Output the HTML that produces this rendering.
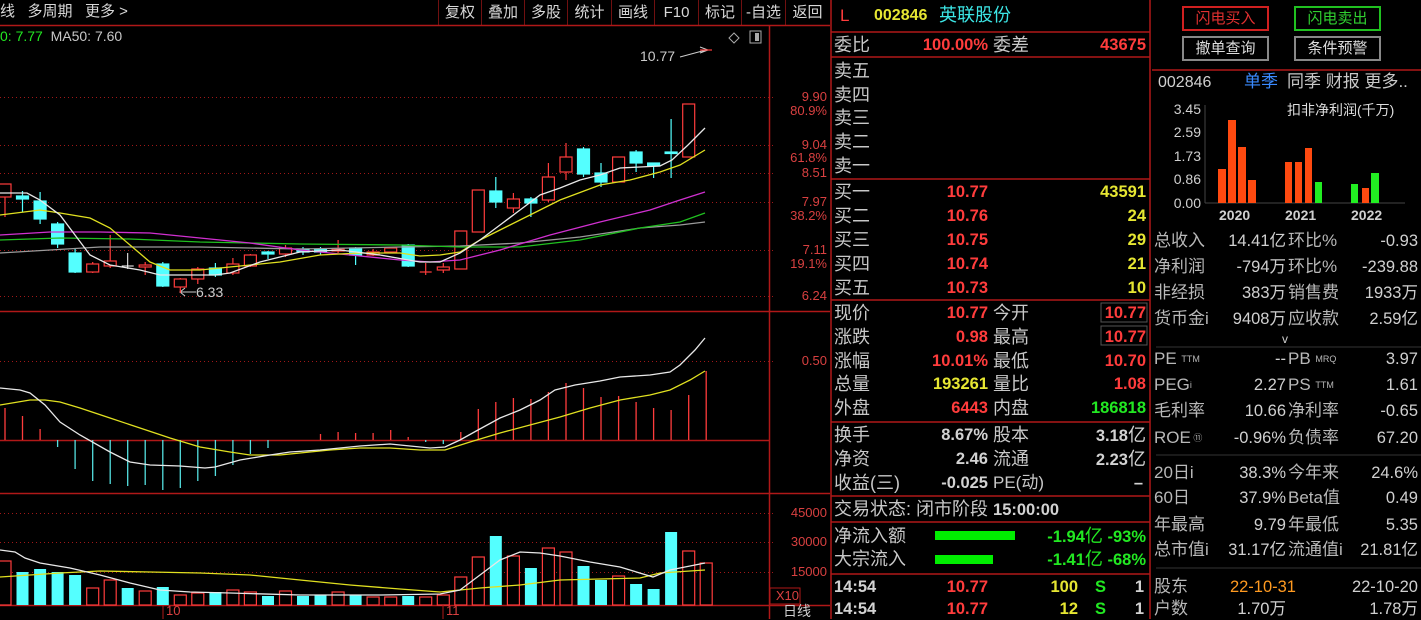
<!DOCTYPE html>
<html><head><meta charset="utf-8">
<style>
*{margin:0;padding:0;box-sizing:border-box}
body{width:1421px;height:619px;background:#000;position:relative;overflow:hidden;font-family:"Liberation Sans","Noto Sans CJK SC",sans-serif;color:#c8c8c8}
.t{position:absolute;white-space:nowrap;line-height:22px}
.l{font-size:18px;color:#c8c8c8}
.n{font-size:16.5px;font-weight:bold}
.r{color:#ff3c3c}.y{color:#e6e632}.g{color:#22e822}.c{color:#3ce6e6}.w{color:#d2d2d2}
.rl{font-size:17px;color:#b8b8b8}
.rv{font-size:16.5px;color:#d0d0d0}
sup{font-size:9px;line-height:0;position:relative;top:-2px;vertical-align:baseline}
.btn{position:absolute;border:2px solid #888;height:25px;width:87px;text-align:center;font-size:15px;line-height:21px}
.tb{position:absolute;top:0;height:25px;line-height:25px;font-size:15px;color:#d8d8d8;text-align:center;border-left:1px solid #701010}
.ax{position:absolute;font-size:13px;color:#d84040;right:594px;line-height:14px}
</style></head><body>

<div class="t" style="left:0;top:1px;font-size:15px;color:#d8d8d8">线&nbsp;&nbsp;&nbsp;多周期&nbsp;&nbsp;&nbsp;更多 &gt;</div>
<div class="tb" style="left:438px;width:43px">复权</div>
<div class="tb" style="left:481px;width:43px">叠加</div>
<div class="tb" style="left:524px;width:43px">多股</div>
<div class="tb" style="left:567px;width:44px">统计</div>
<div class="tb" style="left:611px;width:43px">画线</div>
<div class="tb" style="left:654px;width:44px">F10</div>
<div class="tb" style="left:698px;width:43px">标记</div>
<div class="tb" style="left:741px;width:44px">-自选</div>
<div class="tb" style="left:785px;width:44px">返回</div>

<div class="t" style="left:0;top:25px;font-size:14px"><span class="g">0: 7.77</span>&nbsp;&nbsp;<span style="color:#c8c8c8">MA50: 7.60</span></div>

<svg width="1421" height="619" style="position:absolute;left:0;top:0" xmlns="http://www.w3.org/2000/svg">
<g stroke="#b01818" stroke-width="1.5">
<line x1="0" y1="25.5" x2="830" y2="25.5"/>
<line x1="769.5" y1="25" x2="769.5" y2="619"/>
<line x1="0" y1="311.5" x2="830" y2="311.5"/>
<line x1="0" y1="493.5" x2="830" y2="493.5"/>
<line x1="0" y1="605.5" x2="830" y2="605.5"/>
<line x1="831" y1="0" x2="831" y2="619"/>
<line x1="1150" y1="0" x2="1150" y2="619"/>
<line x1="831" y1="32" x2="1150" y2="32"/>
<line x1="831" y1="57" x2="1150" y2="57"/>
<line x1="831" y1="179" x2="1150" y2="179"/>
<line x1="831" y1="300" x2="1150" y2="300"/>
<line x1="831" y1="422" x2="1150" y2="422"/>
<line x1="831" y1="496" x2="1150" y2="496"/>
<line x1="831" y1="522" x2="1150" y2="522"/>
<line x1="831" y1="574" x2="1150" y2="574"/>
<line x1="1152" y1="70" x2="1421" y2="70"/>
<line x1="0" y1="440.5" x2="769" y2="440.5"/>
</g>
<g stroke="#333" stroke-width="1">
<line x1="1156" y1="347" x2="1421" y2="347"/>
<line x1="1156" y1="455" x2="1421" y2="455"/>
<line x1="1156" y1="568" x2="1421" y2="568"/>
</g>
<g stroke="#a01818" stroke-width="1" stroke-dasharray="1,3">
<line x1="0" y1="97.5" x2="775" y2="97.5"/>
<line x1="0" y1="145.5" x2="775" y2="145.5"/>
<line x1="0" y1="173.5" x2="775" y2="173.5"/>
<line x1="0" y1="202.5" x2="775" y2="202.5"/>
<line x1="0" y1="250.5" x2="775" y2="250.5"/>
<line x1="0" y1="296.5" x2="775" y2="296.5"/>
<line x1="0" y1="361.5" x2="775" y2="361.5"/>
<line x1="0" y1="513.5" x2="775" y2="513.5"/>
<line x1="0" y1="542.5" x2="775" y2="542.5"/>
<line x1="0" y1="572.5" x2="775" y2="572.5"/>
</g>
<path d="M734 33 l5 5 l-5 5 l-5 -5z" fill="none" stroke="#aaa"/>
<rect x="750" y="31" width="11" height="12" fill="none" stroke="#aaa"/><rect x="755" y="33" width="4" height="8" fill="#aaa"/>
<path d="M680 57 L706 50 M700 47 L708 50 L700 53" stroke="#ccc" fill="none"/>
<path d="M180 292 L196 292 M185 288 L180 292 L185 296" stroke="#ccc" fill="none"/>
<g stroke="#ff3c3c" fill="#000" stroke-width="1.2">
<line x1="5" y1="197" x2="5" y2="217"/><rect x="-1" y="184" width="12" height="13"/>
<line x1="92.7" y1="262" x2="92.7" y2="273"/><rect x="86.7" y="264" width="12" height="8"/>
<line x1="110.2" y1="235" x2="110.2" y2="268"/><rect x="104.2" y="261" width="12" height="5"/>
<line x1="145.2" y1="262" x2="145.2" y2="275"/><rect x="139.2" y="265" width="12" height="2"/>
<line x1="180.3" y1="278" x2="180.3" y2="293"/><rect x="174.3" y="279" width="12" height="8"/>
<line x1="197.8" y1="267" x2="197.8" y2="284"/><rect x="191.8" y="269" width="12" height="10"/>
<line x1="232.9" y1="258" x2="232.9" y2="275"/><rect x="226.9" y="264" width="12" height="9"/>
<line x1="250.4" y1="254" x2="250.4" y2="267"/><rect x="244.4" y="255" width="12" height="11"/>
<line x1="285.5" y1="245" x2="285.5" y2="257"/><rect x="279.5" y="248" width="12" height="6"/>
<line x1="338.1" y1="240" x2="338.1" y2="253"/><rect x="332.1" y="249" width="12" height="2"/>
<line x1="373.1" y1="249" x2="373.1" y2="256"/><rect x="367.1" y="252" width="12" height="3"/>
<line x1="390.7" y1="247" x2="390.7" y2="253"/><rect x="384.7" y="248" width="12" height="4"/>
<line x1="425.7" y1="263" x2="425.7" y2="275"/><line x1="419.7" y1="272" x2="431.7" y2="272"/>
<line x1="443.3" y1="263" x2="443.3" y2="273"/><rect x="437.3" y="267" width="12" height="3"/>
<rect x="454.8" y="231" width="12" height="38"/>
<rect x="472.3" y="190" width="12" height="42"/>
<line x1="513.4" y1="193" x2="513.4" y2="213"/><rect x="507.4" y="199" width="12" height="9"/>
<line x1="548.4" y1="163" x2="548.4" y2="202"/><rect x="542.4" y="177" width="12" height="23"/>
<line x1="566" y1="143" x2="566" y2="180"/><rect x="560" y="157" width="12" height="15"/>
<rect x="612.6" y="157" width="12" height="25"/>
<rect x="682.7" y="104" width="12" height="53"/>
<line x1="700" y1="50" x2="712" y2="50"/>
</g>
<g stroke="#54ffff" fill="#54ffff" stroke-width="1.2">
<line x1="22.5" y1="191" x2="22.5" y2="212"/><rect x="16.5" y="196" width="12" height="3"/>
<line x1="40.1" y1="192" x2="40.1" y2="224"/><rect x="34.1" y="201" width="12" height="18"/>
<line x1="57.6" y1="222" x2="57.6" y2="248"/><rect x="51.6" y="224" width="12" height="20"/>
<line x1="75.1" y1="248" x2="75.1" y2="273"/><rect x="69.1" y="253" width="12" height="19"/>
<line x1="162.8" y1="262" x2="162.8" y2="287"/><rect x="156.8" y="264" width="12" height="22"/>
<line x1="215.4" y1="263" x2="215.4" y2="277"/><rect x="209.4" y="268" width="12" height="7"/>
<line x1="268" y1="251" x2="268" y2="259"/><rect x="262" y="252" width="12" height="2"/>
<line x1="303" y1="247" x2="303" y2="255"/><rect x="297" y="249" width="12" height="3"/>
<line x1="320.5" y1="247" x2="320.5" y2="255"/><rect x="314.5" y="249" width="12" height="3"/>
<line x1="355.6" y1="247" x2="355.6" y2="265"/><rect x="349.6" y="248" width="12" height="7"/>
<line x1="408.2" y1="244" x2="408.2" y2="267"/><rect x="402.2" y="245" width="12" height="21"/>
<line x1="495.8" y1="177" x2="495.8" y2="208"/><rect x="489.8" y="191" width="12" height="11"/>
<line x1="530.9" y1="197" x2="530.9" y2="217"/><rect x="524.9" y="199" width="12" height="4"/>
<line x1="583.5" y1="147" x2="583.5" y2="177"/><rect x="577.5" y="149" width="12" height="25"/>
<line x1="601" y1="163" x2="601" y2="187"/><rect x="595" y="173" width="12" height="9"/>
<line x1="636.1" y1="150" x2="636.1" y2="172"/><rect x="630.1" y="152" width="12" height="11"/>
<line x1="653.6" y1="163" x2="653.6" y2="178"/><rect x="647.6" y="163" width="12" height="3"/>
<line x1="671.1" y1="119" x2="671.1" y2="178"/><rect x="665.1" y="152" width="12" height="1.5"/>
</g>
<path d="M121.7 266 H133.7 M127.7 253 V269" stroke="#fff"/>
<g fill="none" stroke-width="1.3">
<polyline stroke="#9a9a9a" points="0,253 50,250 100,247 200,247 300,249 400,247 460,246 520,243 580,237 640,228 680,225 705,222"/>
<polyline stroke="#20c020" points="0,240 60,238 130,239 200,242 300,244 400,245 460,247 520,247 580,240 640,228 680,222 705,213"/>
<polyline stroke="#d030d0" points="0,235 50,232 100,232 150,233 200,238 250,243 300,250 350,255 400,260 430,262 460,260 500,250 550,235 600,222 650,210 680,200 705,192"/>
<polyline stroke="#e0e020" points="0,215 40,210 60,213 90,218 110,228 130,245 150,262 170,270 200,270 230,267 280,262 320,255 360,253 400,253 420,256 440,255 460,252 480,240 500,230 530,215 560,200 600,185 630,180 660,172 680,165 705,150"/>
<polyline stroke="#e8e8e8" points="0,193 27,193 40,200 60,215 75,235 90,255 110,265 140,270 160,275 190,275 215,275 230,273 260,262 300,252 340,250 380,255 420,262 440,262 460,253 480,240 500,225 520,210 540,195 560,188 580,180 600,175 620,168 640,167 660,166 672,160 688,145 705,128"/>
</g>
<g stroke="#ff3c3c" stroke-width="1.3">
<line x1="5" y1="440" x2="5" y2="408"/><line x1="22.5" y1="440" x2="22.5" y2="416"/><line x1="40.1" y1="440" x2="40.1" y2="429"/>
<line x1="320.5" y1="440" x2="320.5" y2="434"/><line x1="338.1" y1="440" x2="338.1" y2="432"/><line x1="355.6" y1="440" x2="355.6" y2="433"/><line x1="373.1" y1="440" x2="373.1" y2="433"/><line x1="390.7" y1="440" x2="390.7" y2="430"/><line x1="408.2" y1="440" x2="408.2" y2="437"/>
<line x1="460.8" y1="440" x2="460.8" y2="432"/><line x1="478.3" y1="440" x2="478.3" y2="409"/><line x1="495.8" y1="440" x2="495.8" y2="402"/><line x1="513.4" y1="440" x2="513.4" y2="398"/><line x1="530.9" y1="440" x2="530.9" y2="399"/><line x1="548.4" y1="440" x2="548.4" y2="392"/><line x1="566" y1="440" x2="566" y2="383"/><line x1="583.5" y1="440" x2="583.5" y2="388"/><line x1="601" y1="440" x2="601" y2="397"/><line x1="618.6" y1="440" x2="618.6" y2="396"/><line x1="636.1" y1="440" x2="636.1" y2="402"/><line x1="653.6" y1="440" x2="653.6" y2="408"/><line x1="671.1" y1="440" x2="671.1" y2="410"/><line x1="688.7" y1="440" x2="688.7" y2="395"/><line x1="706.2" y1="440" x2="706.2" y2="371"/>
</g>
<g stroke="#54e0e0" stroke-width="1.3">
<line x1="57.6" y1="440" x2="57.6" y2="447"/><line x1="75.1" y1="440" x2="75.1" y2="469"/><line x1="92.7" y1="440" x2="92.7" y2="481"/><line x1="110.2" y1="440" x2="110.2" y2="484"/><line x1="127.7" y1="440" x2="127.7" y2="486"/><line x1="145.2" y1="440" x2="145.2" y2="485"/><line x1="162.8" y1="440" x2="162.8" y2="490"/><line x1="180.3" y1="440" x2="180.3" y2="488"/><line x1="197.8" y1="440" x2="197.8" y2="481"/><line x1="215.4" y1="440" x2="215.4" y2="476"/><line x1="232.9" y1="440" x2="232.9" y2="465"/><line x1="250.4" y1="440" x2="250.4" y2="454"/><line x1="268" y1="440" x2="268" y2="448"/><line x1="425.7" y1="440" x2="425.7" y2="442"/><line x1="443.3" y1="440" x2="443.3" y2="444"/>
</g>
<g fill="none" stroke-width="1.3">
<polyline stroke="#e0e020" points="0,405 30,400 45,400 60,402 80,408 110,418 140,428 170,438 200,447 230,452 250,455 280,455 300,453 330,450 360,448 390,448 420,450 445,450 470,442 500,433 530,425 560,417 590,408 620,400 650,395 670,390 690,380 705,371"/>
<polyline stroke="#e8e8e8" points="0,388 20,390 30,393 45,405 60,422 80,435 110,452 130,462 150,465 180,466 205,468 215,467 240,460 270,455 290,452 320,450 360,446 390,444 410,446 430,448 445,447 460,440 478,430 500,418 520,410 540,400 555,390 575,385 600,381 620,377 650,375 670,372 680,365 695,350 705,338"/>
</g>
<g fill="#000" stroke="#ff3c3c" stroke-width="1.2">
<rect x="-1" y="561" width="12" height="44"/><rect x="86.7" y="588" width="12" height="17"/><rect x="104.2" y="580" width="12" height="25"/><rect x="139.2" y="591" width="12" height="14"/><rect x="174.3" y="595" width="12" height="10"/><rect x="191.8" y="593" width="12" height="12"/><rect x="226.9" y="590" width="12" height="15"/><rect x="244.4" y="592" width="12" height="13"/><rect x="279.5" y="591" width="12" height="14"/><rect x="332.1" y="592" width="12" height="13"/><rect x="367.1" y="597" width="12" height="8"/><rect x="384.7" y="597" width="12" height="8"/><rect x="419.7" y="597" width="12" height="8"/><rect x="437.3" y="595" width="12" height="10"/><rect x="454.8" y="577" width="12" height="28"/><rect x="472.3" y="557" width="12" height="48"/><rect x="507.4" y="556" width="12" height="49"/><rect x="542.4" y="548" width="12" height="57"/><rect x="560" y="552" width="12" height="53"/><rect x="612.6" y="576" width="12" height="29"/><rect x="682.7" y="551" width="12" height="54"/><rect x="700.2" y="563" width="12" height="42"/>
</g>
<g fill="#54ffff">
<rect x="16.5" y="572" width="12" height="33"/><rect x="34.1" y="569" width="12" height="36"/><rect x="51.6" y="572" width="12" height="33"/><rect x="69.1" y="575" width="12" height="30"/><rect x="121.7" y="588" width="12" height="17"/><rect x="156.8" y="587" width="12" height="18"/><rect x="209.4" y="592" width="12" height="13"/><rect x="262" y="596" width="12" height="9"/><rect x="297" y="596" width="12" height="9"/><rect x="314.5" y="595" width="12" height="10"/><rect x="349.6" y="595" width="12" height="10"/><rect x="402.2" y="596" width="12" height="9"/><rect x="489.8" y="536" width="12" height="69"/><rect x="524.9" y="568" width="12" height="37"/><rect x="577.5" y="566" width="12" height="39"/><rect x="595" y="580" width="12" height="25"/><rect x="630.1" y="584" width="12" height="21"/><rect x="647.6" y="589" width="12" height="16"/><rect x="665.1" y="532" width="12" height="73"/>
</g>
<g fill="none" stroke-width="1.3">
<polyline stroke="#e0e020" points="0,577 60,573 100,571 150,572 200,573 250,575 300,580 350,585 400,589 440,592 460,590 480,588 520,585 560,580 600,579 640,578 660,573 690,571 705,570"/>
<polyline stroke="#e8e8e8" points="0,550 15,552 25,558 40,563 70,568 100,575 130,583 160,590 190,592 230,593 300,595 380,595 440,594 460,590 480,575 500,560 520,552 540,553 560,556 590,562 620,567 653,577 670,570 690,566 705,563"/>
</g>
<rect x="770" y="588" width="30" height="16" fill="none" stroke="#b01818"/>
<line x1="163" y1="605" x2="163" y2="619" stroke="#b01818"/>
<line x1="443" y1="605" x2="443" y2="619" stroke="#b01818"/>
<rect x="935" y="531" width="80" height="9" fill="#00ee00"/>
<rect x="935" y="555" width="58" height="9" fill="#00ee00"/>
<line x1="1205" y1="105" x2="1205" y2="203" stroke="#444"/>
<line x1="1205" y1="203" x2="1405" y2="203" stroke="#444"/>
<g fill="#ff4a10">
<rect x="1218" y="169" width="8" height="34"/><rect x="1228" y="120" width="8" height="83"/><rect x="1238" y="147" width="8" height="56"/><rect x="1248" y="180" width="8" height="23"/>
<rect x="1285" y="162" width="7" height="41"/><rect x="1295" y="162" width="7" height="41"/><rect x="1305" y="148" width="7" height="55"/>
<rect x="1362" y="188" width="7" height="15"/>
</g>
<g fill="#22ee22"><rect x="1315" y="182" width="7" height="21"/><rect x="1351" y="184" width="7" height="19"/><rect x="1371" y="173" width="8" height="30"/></g>
<rect x="1101" y="303" width="46" height="19" fill="none" stroke="#555"/>
<rect x="1101" y="326" width="46" height="19" fill="none" stroke="#555"/>
</svg>

<div class="ax" style="top:90px">9.90</div><div class="ax" style="top:104px">80.9%</div>
<div class="ax" style="top:138px">9.04</div><div class="ax" style="top:151px">61.8%</div>
<div class="ax" style="top:166px">8.51</div>
<div class="ax" style="top:195px">7.97</div><div class="ax" style="top:209px">38.2%</div>
<div class="ax" style="top:243px">7.11</div><div class="ax" style="top:257px">19.1%</div>
<div class="ax" style="top:289px">6.24</div>
<div class="ax" style="top:354px">0.50</div>
<div class="ax" style="top:506px">45000</div><div class="ax" style="top:535px">30000</div><div class="ax" style="top:565px">15000</div>
<div class="ax" style="top:589px;right:622px">X10</div>
<div class="t" style="left:640px;top:45px;font-size:14px;color:#ccc">10.77</div>
<div class="t" style="left:196px;top:281px;font-size:14px;color:#ccc">6.33</div>
<div class="t" style="left:166px;top:603px;font-size:13px;color:#d84040;line-height:16px">10</div>
<div class="t" style="left:446px;top:603px;font-size:13px;color:#d84040;line-height:16px">11</div>
<div class="t" style="left:783px;top:603px;font-size:14px;color:#ccc;line-height:16px">日线</div>

<div class="t r" style="left:840px;top:5px;font-size:17px">L</div>
<div class="t y n" style="left:874px;top:5px;font-size:16px">002846</div>
<div class="t c" style="left:939px;top:4px;font-size:18px">英联股份</div>

<div class="t l" style="left:834px;top:34px">委比</div>
<div class="t n r" style="right:433px;top:34px">100.00%</div>
<div class="t l" style="left:993px;top:34px">委差</div>
<div class="t n r" style="right:275px;top:34px">43675</div>

<div class="t l" style="left:834px;top:60px">卖五</div>
<div class="t l" style="left:834px;top:84px">卖四</div>
<div class="t l" style="left:834px;top:107px">卖三</div>
<div class="t l" style="left:834px;top:131px">卖二</div>
<div class="t l" style="left:834px;top:155px">卖一</div>

<div class="t l" style="left:834px;top:181px">买一</div><div class="t n r" style="right:433px;top:181px">10.77</div><div class="t n y" style="right:275px;top:181px">43591</div>
<div class="t l" style="left:834px;top:205px">买二</div><div class="t n r" style="right:433px;top:205px">10.76</div><div class="t n y" style="right:275px;top:205px">24</div>
<div class="t l" style="left:834px;top:229px">买三</div><div class="t n r" style="right:433px;top:229px">10.75</div><div class="t n y" style="right:275px;top:229px">29</div>
<div class="t l" style="left:834px;top:253px">买四</div><div class="t n r" style="right:433px;top:253px">10.74</div><div class="t n y" style="right:275px;top:253px">21</div>
<div class="t l" style="left:834px;top:277px">买五</div><div class="t n r" style="right:433px;top:277px">10.73</div><div class="t n y" style="right:275px;top:277px">10</div>

<div class="t l" style="left:834px;top:302px">现价</div><div class="t n r" style="right:433px;top:302px">10.77</div><div class="t l" style="left:993px;top:302px">今开</div><div class="t n r" style="right:275px;top:302px">10.77</div>
<div class="t l" style="left:834px;top:326px">涨跌</div><div class="t n r" style="right:433px;top:326px">0.98</div><div class="t l" style="left:993px;top:326px">最高</div><div class="t n r" style="right:275px;top:326px">10.77</div>
<div class="t l" style="left:834px;top:350px">涨幅</div><div class="t n r" style="right:433px;top:350px">10.01%</div><div class="t l" style="left:993px;top:350px">最低</div><div class="t n r" style="right:275px;top:350px">10.70</div>
<div class="t l" style="left:834px;top:373px">总量</div><div class="t n y" style="right:433px;top:373px">193261</div><div class="t l" style="left:993px;top:373px">量比</div><div class="t n r" style="right:275px;top:373px">1.08</div>
<div class="t l" style="left:834px;top:397px">外盘</div><div class="t n r" style="right:433px;top:397px">6443</div><div class="t l" style="left:993px;top:397px">内盘</div><div class="t n g" style="right:275px;top:397px">186818</div>

<div class="t l" style="left:834px;top:424px">换手</div><div class="t n w" style="right:433px;top:424px">8.67%</div><div class="t l" style="left:993px;top:424px">股本</div><div class="t n w" style="right:275px;top:424px">3.18<span style="font-weight:normal;font-size:18px">亿</span></div>
<div class="t l" style="left:834px;top:448px">净资</div><div class="t n w" style="right:433px;top:448px">2.46</div><div class="t l" style="left:993px;top:448px">流通</div><div class="t n w" style="right:275px;top:448px">2.23<span style="font-weight:normal;font-size:18px">亿</span></div>
<div class="t l" style="left:834px;top:472px">收益(三)</div><div class="t n w" style="right:433px;top:472px">-0.025</div><div class="t l" style="left:993px;top:472px;font-size:17px">PE(动)</div><div class="t n w" style="right:278px;top:472px">–</div>

<div class="t l" style="left:834px;top:498px">交易状态: 闭市阶段 <span class="n w">15:00:00</span></div>
<div class="t l" style="left:834px;top:525px">净流入额</div><div class="t n g" style="right:275px;top:525px">-1.94<span style="font-weight:normal;font-size:18px">亿</span> -93%</div>
<div class="t l" style="left:834px;top:548px">大宗流入</div><div class="t n g" style="right:275px;top:548px">-1.41<span style="font-weight:normal;font-size:18px">亿</span> -68%</div>
<div class="t n w" style="left:834px;top:576px">14:54</div><div class="t n r" style="right:433px;top:576px">10.77</div><div class="t n y" style="right:343px;top:576px">100</div><div class="t n g" style="left:1095px;top:576px">S</div><div class="t n w" style="right:277px;top:576px">1</div>
<div class="t n w" style="left:834px;top:598px">14:54</div><div class="t n r" style="right:433px;top:598px">10.77</div><div class="t n y" style="right:343px;top:598px">12</div><div class="t n g" style="left:1095px;top:598px">S</div><div class="t n w" style="right:277px;top:598px">1</div>

<div class="btn" style="left:1182px;top:6px;border-color:#d02020;color:#e03030">闪电买入</div>
<div class="btn" style="left:1294px;top:6px;border-color:#20c020;color:#30d030">闪电卖出</div>
<div class="btn" style="left:1182px;top:36px;color:#ddd">撤单查询</div>
<div class="btn" style="left:1294px;top:36px;color:#ddd">条件预警</div>
<div class="t rv" style="left:1158px;top:72px;font-size:16px">002846</div>
<div class="t" style="left:1244px;top:71px;font-size:17px;color:#3a8aff">单季</div>
<div class="t" style="left:1287px;top:71px;font-size:17px;color:#c8c8c8">同季 财报 更多..</div>
<div class="t" style="left:1287px;top:99px;font-size:14px;color:#ddd">扣非净利润(千万)</div>
<div class="t rv" style="right:220px;top:98px;font-size:14px">3.45</div>
<div class="t rv" style="right:220px;top:121px;font-size:14px">2.59</div>
<div class="t rv" style="right:220px;top:145px;font-size:14px">1.73</div>
<div class="t rv" style="right:220px;top:168px;font-size:14px">0.86</div>
<div class="t rv" style="right:220px;top:192px;font-size:14px">0.00</div>
<div class="t rv" style="left:1219px;top:204px;font-size:14px;font-weight:bold">2020</div>
<div class="t rv" style="left:1285px;top:204px;font-size:14px;font-weight:bold">2021</div>
<div class="t rv" style="left:1351px;top:204px;font-size:14px;font-weight:bold">2022</div>

<div class="t rl" style="left:1154px;top:230px">总收入</div><div class="t rv" style="right:135px;top:230px">14.41亿</div><div class="t rl" style="left:1288px;top:230px">环比%</div><div class="t rv" style="right:3px;top:230px">-0.93</div>
<div class="t rl" style="left:1154px;top:256px">净利润</div><div class="t rv" style="right:135px;top:256px">-794万</div><div class="t rl" style="left:1288px;top:256px">环比%</div><div class="t rv" style="right:3px;top:256px">-239.88</div>
<div class="t rl" style="left:1154px;top:282px">非经损</div><div class="t rv" style="right:135px;top:282px">383万</div><div class="t rl" style="left:1288px;top:282px">销售费</div><div class="t rv" style="right:3px;top:282px">1933万</div>
<div class="t rl" style="left:1154px;top:308px">货币金i</div><div class="t rv" style="right:135px;top:308px">9408万</div><div class="t rl" style="left:1288px;top:308px">应收款</div><div class="t rv" style="right:3px;top:308px">2.59亿</div>
<div class="t rv" style="left:1282px;top:328px;font-size:12px">v</div>
<div class="t rl" style="left:1154px;top:348px">PE <sup>TTM</sup></div><div class="t rv" style="right:135px;top:348px">--</div><div class="t rl" style="left:1288px;top:348px">PB <sup>MRQ</sup></div><div class="t rv" style="right:3px;top:348px">3.97</div>
<div class="t rl" style="left:1154px;top:374px">PEG<sup>i</sup></div><div class="t rv" style="right:135px;top:374px">2.27</div><div class="t rl" style="left:1288px;top:374px">PS <sup>TTM</sup></div><div class="t rv" style="right:3px;top:374px">1.61</div>
<div class="t rl" style="left:1154px;top:400px">毛利率</div><div class="t rv" style="right:135px;top:400px">10.66</div><div class="t rl" style="left:1288px;top:400px">净利率</div><div class="t rv" style="right:3px;top:400px">-0.65</div>
<div class="t rl" style="left:1154px;top:427px">ROE<sup> ⑪</sup></div><div class="t rv" style="right:135px;top:427px">-0.96%</div><div class="t rl" style="left:1288px;top:427px">负债率</div><div class="t rv" style="right:3px;top:427px">67.20</div>
<div class="t rl" style="left:1154px;top:462px">20日i</div><div class="t rv" style="right:135px;top:462px">38.3%</div><div class="t rl" style="left:1288px;top:462px">今年来</div><div class="t rv" style="right:3px;top:462px">24.6%</div>
<div class="t rl" style="left:1154px;top:487px">60日</div><div class="t rv" style="right:135px;top:487px">37.9%</div><div class="t rl" style="left:1288px;top:487px">Beta值</div><div class="t rv" style="right:3px;top:487px">0.49</div>
<div class="t rl" style="left:1154px;top:514px">年最高</div><div class="t rv" style="right:135px;top:514px">9.79</div><div class="t rl" style="left:1288px;top:514px">年最低</div><div class="t rv" style="right:3px;top:514px">5.35</div>
<div class="t rl" style="left:1154px;top:539px">总市值i</div><div class="t rv" style="right:135px;top:539px">31.17亿</div><div class="t rl" style="left:1288px;top:539px">流通值i</div><div class="t rv" style="right:3px;top:539px">21.81亿</div>
<div class="t rl" style="left:1154px;top:576px">股东</div><div class="t rv" style="right:125px;top:576px;color:#ff9a20">22-10-31</div><div class="t rv" style="right:3px;top:576px">22-10-20</div>
<div class="t rl" style="left:1154px;top:598px">户数</div><div class="t rv" style="right:135px;top:598px">1.70万</div><div class="t rv" style="right:3px;top:598px">1.78万</div>
</body></html>
